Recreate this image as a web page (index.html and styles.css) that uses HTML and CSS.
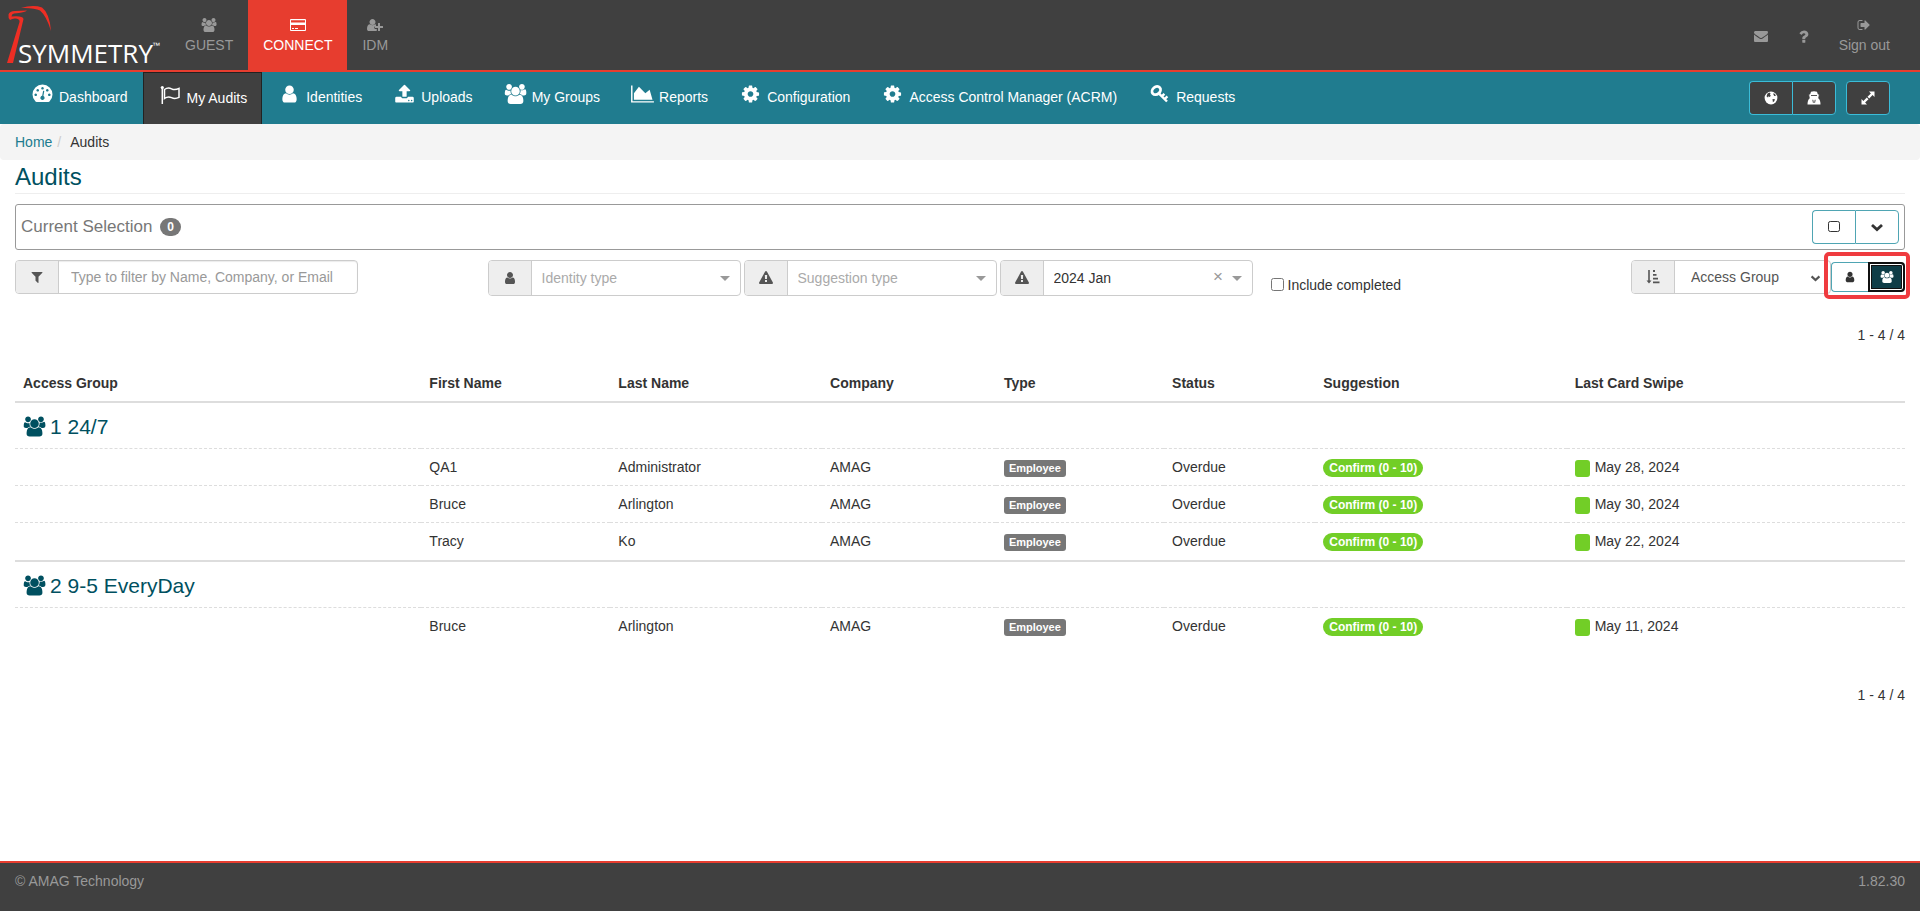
FILE: index.html
```html
<!DOCTYPE html>
<html lang="en">
<head>
    <meta charset="UTF-8">
    <meta name="viewport" content="width=device-width, initial-scale=1.0">
    <title>Audits</title>
    <link rel="stylesheet" href="styles.css">
</head>
<body>
    <!-- icon set -->
    <svg class="sprite" aria-hidden="true">
        <symbol id="i-users" viewBox="0 0 2048 1792"><path d="M657 896q-162 5-265 128h-134q-82 0-138-40.5t-56-118.5q0-353 124-353 6 0 43.5 21t97.5 42.5 119 21.5q67 0 133-23-5 37-5 66 0 159 93 287zm1071 637q0 120-73 189.500t-194 69.500h-874q-121 0-194-69.500t-73-189.500q0-53 3.500-103.500t14-109 26.500-108.500 43-97.500 62-81 85.500-53.500 111.500-20q10 0 43 21.500t73 48 107 48 135 21.500 135-21.500 107-48 73-48 43-21.500q61 0 111.500 20t85.500 53.500 62 81 43 97.500 26.500 108.500 14 109 3.500 103.500zm-1024-1277q0 106-75 181t-181 75-181-75-75-181 75-181 181-75 181 75 75 181zm704 384q0 159-112.500 271.500t-271.500 112.500-271.500-112.500-112.500-271.500 112.500-271.500 271.500-112.500 271.500 112.500 112.500 271.500zm576 225q0 78-56 118.500t-138 40.500h-134q-103-123-265-128 93-128 93-287 0-29-5-66 66 23 133 23 59 0 119-21.500t97.500-42.500 43.500-21q124 0 124 353zm-128-609q0 106-75 181t-181 75-181-75-75-181 75-181 181-75 181 75 75 181z"/></symbol>
        <symbol id="i-user" viewBox="0 0 1792 1792"><path d="M1536 1399q0 109-62.500 187t-150.500 78h-854q-88 0-150.500-78t-62.500-187q0-85 8.500-160.500t31.500-152 58.500-131 94-89 134.500-34.500q131 128 313 128t313-128q76 0 134.500 34.500t94 89 58.500 131 31.500 152 8.500 160.500zm-256-887q0 159-112.500 271.500t-271.500 112.500-271.500-112.500-112.500-271.500 112.500-271.500 271.500-112.500 271.500 112.500 112.500 271.500z"/></symbol>
        <symbol id="i-user-plus" viewBox="0 0 2048 1792"><path d="M704 896q-159 0-271.500-112.500t-112.500-271.500 112.500-271.500 271.500-112.500 271.500 112.500 112.500 271.500-112.500 271.500-271.500 112.500zM1664 1024h352q32 0 32 32v192q0 32-32 32h-352v352q0 32-32 32h-192q-32 0-32-32v-352h-352q-32 0-32-32v-192q0-32 32-32h352v-352q0-32 32-32h192q32 0 32 32v352zM928 1248q0 80 60 130t164 30h100v220q-40 36-130 36h-867q-120 0-188-69t-67-190q0-300 102-450t268-150q20 0 60 30 120 93 274 93t274-93q40-30 60-30 60 0 110 20v195q-220-20-220 228z"/></symbol>
        <symbol id="i-card" viewBox="0 0 16 14"><path fill-rule="evenodd" d="M1 1h14q1 0 1 1v10q0 1-1 1H1q-1 0-1-1V2q0-1 1-1zm0 1.200v2.300h14V2.200zM1 7v4.900h14V7zM2 10h2v1H2zm3 0h3v1H5z"/></symbol>
        <symbol id="i-dash" viewBox="0 0 20 20"><path fill-rule="evenodd" d="M3 17.600A10 10 0 1 1 17 17.600q-.5.400-1 .4H4q-.5 0-1-.4zM10 3a1.300 1.300 0 1 0 .01 0zM5.200 5a1.300 1.300 0 1 0 .01 0zM14.800 5a1.300 1.300 0 1 0 .01 0zM3.200 9.500a1.300 1.300 0 1 0 .01 0zM16.800 9.500a1.300 1.300 0 1 0 .01 0zM10.600 6.800l-.9 5a2.100 2.100 0 1 0 1.200.2l.9-5z"/></symbol>
        <symbol id="i-flag" viewBox="0 0 20 20"><path d="M1.800 2v17M4 4.500q3.500-2.500 7-.7t7.500-.4v9q-4 2-7.500.3t-7 .8z" fill="none" stroke="currentColor" stroke-width="1.500"/><circle cx="1.800" cy="2.500" r="1.600"/></symbol>
        <symbol id="i-upload" viewBox="0 0 1792 1792"><path d="M1344 1472q0-26-19-45t-45-19-45 19-19 45 19 45 45 19 45-19 19-45zm256 0q0-26-19-45t-45-19-45 19-19 45 19 45 45 19 45-19 19-45zm128-224v320q0 40-28 68t-68 28h-1472q-40 0-68-28t-28-68v-320q0-40 28-68t68-28h427q21 56 70.500 92t110.500 36h256q61 0 110.500-36t70.500-92h427q40 0 68 28t28 68zm-325-648q-17 40-59 40h-256v448q0 26-19 45t-45 19h-256q-26 0-45-19t-19-45v-448h-256q-42 0-59-40-17-39 14-69l448-448q18-19 45-19t45 19l448 448q31 30 14 69z"/></symbol>
        <symbol id="i-chart" viewBox="0 0 2048 1792"><path d="M2048 1536v128h-2048v-1536h128v1408h1920zm-384-1024l256 896h-1664v-576l448-576 576 576z"/></symbol>
        <symbol id="i-cog" viewBox="0 0 1792 1792"><path d="M1152 896q0-106-75-181t-181-75-181 75-75 181 75 181 181 75 181-75 75-181zm512-109v222q0 12-8 23t-20 13l-185 28q-19 54-39 91 35 50 107 138 10 12 10 25t-9 23q-27 37-99 108t-94 71q-12 0-26-9l-138-108q-44 23-91 38-16 136-29 186-7 28-36 28h-222q-14 0-24.500-8.500t-11.500-21.500l-28-184q-49-16-90-37l-141 107q-10 9-25 9-14 0-25-11-126-114-165-168-7-10-7-23 0-12 8-23 15-21 51-66.500t54-70.500q-27-50-41-99l-183-27q-13-2-21-12.500t-8-23.500v-222q0-12 8-23t19-13l186-28q14-46 39-92-40-57-107-138-10-12-10-24 0-10 9-23 26-36 98.500-107.500t94.500-71.500q13 0 26 10l138 107q44-23 91-38 16-136 29-186 7-28 36-28h222q14 0 24.500 8.500t11.500 21.500l28 184q49 16 90 37l142-107q9-9 24-9 13 0 25 10 129 119 165 170 7 8 7 22 0 12-8 23-15 21-51 66.500t-54 70.500q26 50 41 98l183 28q13 2 21 12.500t8 23.500z"/></symbol>
        <symbol id="i-key" viewBox="0 0 20 20"><path d="M9.800 9.800l7.700 7.700M12.500 12.200l2.400-2.400M15.300 15l2.600-2.600" fill="none" stroke="currentColor" stroke-width="2.400"/><ellipse cx="6.800" cy="6.600" rx="4.600" ry="3.700" transform="rotate(-40 6.800 6.600)" fill="none" stroke="currentColor" stroke-width="2.800"/></symbol>
        <symbol id="i-mail" viewBox="0 0 1792 1792"><path d="M1792 710v794q0 66-47 113t-113 47h-1472q-66 0-113-47t-47-113v-794q44 49 101 87 362 246 497 345 57 42 92.500 65.500t94.500 48 110 24.500h2q51 0 110-24.500t94.500-48 92.500-65.500q170-123 498-345 57-39 100-87zm0-294q0 79-49 151t-122 123q-376 261-468 325-10 7-42.500 30.500t-54 38-52 32.500-57.500 27-50 9h-2q-23 0-50-9t-57.500-27-52-32.500-54-38-42.500-30.500q-91-64-262-182.500t-205-142.500q-62-42-117-115.500t-55-136.500q0-78 41.500-130t118.500-52h1472q65 0 112.500 47t47.500 113z"/></symbol>
        <symbol id="i-help" viewBox="320 128 1152 1408"><path d="M1088 1256v240q0 16-12 28t-28 12h-240q-16 0-28-12t-12-28v-240q0-16 12-28t28-12h240q16 0 28 12t12 28zm316-600q0 54-15.500 101t-35 76.500-55 59.500-57.500 43.500-61 35.500q-41 23-68.500 65t-27.500 67q0 17-12 32.500t-28 15.500h-240q-15 0-25.500-18.500t-10.500-37.500v-45q0-83 65-156.500t143-108.500q59-27 84-56t25-76q0-42-46.500-74t-107.500-32q-65 0-108 29-35 25-107 115-13 16-31 16-12 0-25-8l-164-125q-13-10-15.500-25t5.500-28q160-266 464-266 80 0 161 31t146 83 106 127.500 41 158.500z"/></symbol>
        <symbol id="i-signout" viewBox="0 0 1792 1792"><path d="M704 1440q0 4 1 20t.5 26.500-3 23.500-10 19.500-20.500 6.500h-320q-119 0-203.500-84.500t-84.500-203.500v-704q0-119 84.500-203.500t203.500-84.500h320q13 0 22.500 9.500t9.500 22.500q0 4 1 20t.5 26.500-3 23.500-10 19.500-20.500 6.500h-320q-66 0-113 47t-47 113v704q0 66 47 113t113 47h312l11.500 1 11.500 3 8 5.500 7 9 2 13.500zm928-544q0 26-19 45l-544 544q-19 19-45 19t-45-19-19-45v-288h-448q-26 0-45-19t-19-45v-384q0-26 19-45t45-19h448v-288q0-26 19-45t45-19 45 19l544 544q19 19 19 45z"/></symbol>
        <symbol id="i-globe" viewBox="0 0 14 14"><circle cx="7" cy="7" r="6.400"/><path d="M3.500 2.500l2-1 1 1-.6 1.400 1.100.8-1.500 1.200-1.600-.6.300 1.500-1.700-1.600zM9 2.500l1.800.2 1.200 2-1.800.2zM8.500 8l2.500.3-.8 1.900-1.300 1z" fill="#404040"/></symbol>
        <symbol id="i-secret" viewBox="0 0 14 14"><path d="M4 .8q3-1.200 6 0l.8 2.400 1.700.8-1 .6q.3 1.700-.5 2.400 2.500 1.600 2.500 6.500H.5Q.5 8.600 3 7q-.8-.700-.500-2.400L1.500 4l1.700-.8z"/><path d="M4 4.500h6M5.800 8.800l.6 3M8.200 8.800l-.6 3" stroke="#404040" stroke-width=".9"/></symbol>
        <symbol id="i-expand" viewBox="0 0 14 14"><path d="M8 .500h5.500V6l-1.900-1.900-3.400 3.400-1.700-1.700 3.400-3.400zM.5 8l1.900 1.900 3.400-3.400 1.700 1.700-3.400 3.400L6 13.500H.5z"/></symbol>
        <symbol id="i-square" viewBox="0 0 14 14"><rect x="1.500" y="1.500" width="11" height="10" rx="1.800" fill="none" stroke="currentColor" stroke-width="1"/></symbol>
        <symbol id="i-chevron" viewBox="0 0 14 14"><path d="M2 5l5 4.600L12 5" fill="none" stroke="currentColor" stroke-width="2.800"/></symbol>
        <symbol id="i-filter" viewBox="0 0 1792 1792"><path d="M1595 295q17 41-14 70l-493 493v742q0 42-39 59-13 5-25 5-27 0-45-19l-256-256q-19-19-19-45v-486l-493-493q-31-29-14-70 17-39 59-39h1280q42 0 59 39z"/></symbol>
        <symbol id="i-warn" viewBox="0 0 1792 1792"><path d="M1024 1375v-190q0-14-9.500-23.500t-22.500-9.500h-192q-13 0-22.500 9.500t-9.500 23.500v190q0 14 9.500 23.500t22.500 9.500h192q13 0 22.500-9.500t9.500-23.500zm-2-374l18-459q0-12-10-19-13-11-24-11h-220q-11 0-24 11-10 7-10 21l17 457q0 10 10 16.500t24 6.500h185q14 0 23.500-6.500t10.500-16.500zm-14-934l768 1408q35 63-2 126-17 29-46.500 46t-63.500 17h-1536q-34 0-63.500-17t-46.500-46q-37-63-2-126l768-1408q17-31 47-49t65-18 65 18 47 49z"/></symbol>
        <symbol id="i-sort" viewBox="0 0 14 14"><path d="M2.200 0h1.600v10.500h1.700L3 13.500.5 10.500h1.700zM7 0h2v2H7zM7 4h3.500v1.800H7zM7 7.800h5v1.800H7zM7 11.500h6.500v1.800H7z"/></symbol>
    </svg>

    <header class="topbar">
        <a class="logo" href="#" aria-label="Symmetry">
            <svg width="170" height="70" viewBox="0 0 170 70">
                <path d="M7 63L19.500 22Q20 19 16 18.500Q12.500 18 10 20Q8 18 8.500 14.500Q9.500 11 15 11L27 10.500Q25 12.500 14 13.500Q11.500 14 11.500 16.500Q23 15.500 23.500 19L13 63Z" fill="#ee2e24"/>
                <path d="M21 8Q33 4.500 42 7.500Q49.500 13 51 31Q46.500 16 40 10.500Q34 7.500 21 8Z" fill="#ee2e24"/>
                <text class="logo-text" x="18" y="63">SYMMETRY</text>
                <text class="logo-tm" x="152" y="48">™</text>
            </svg>
        </a>
        <nav class="products">
            <a href="#"><svg class="icon wide"><use href="#i-users"/></svg><span>GUEST</span></a>
            <a href="#" class="active"><svg class="icon wide"><use href="#i-card"/></svg><span>CONNECT</span></a>
            <a href="#"><svg class="icon wide"><use href="#i-user-plus"/></svg><span>IDM</span></a>
        </nav>
        <nav class="account">
            <a href="#" aria-label="Messages"><svg class="icon"><use href="#i-mail"/></svg></a>
            <a href="#" aria-label="Help"><svg class="icon help"><use href="#i-help"/></svg></a>
            <a href="#"><svg class="icon"><use href="#i-signout"/></svg><span>Sign out</span></a>
        </nav>
    </header>

    <div class="menubar">
        <nav class="menu">
            <a href="#"><svg class="icon"><use href="#i-dash"/></svg>Dashboard</a>
            <a href="#" class="active"><svg class="icon"><use href="#i-flag"/></svg>My Audits</a>
            <a href="#"><svg class="icon"><use href="#i-user"/></svg>Identities</a>
            <a href="#"><svg class="icon"><use href="#i-upload"/></svg>Uploads</a>
            <a href="#"><svg class="icon"><use href="#i-users"/></svg>My Groups</a>
            <a href="#"><svg class="icon"><use href="#i-chart"/></svg>Reports</a>
            <a href="#"><svg class="icon"><use href="#i-cog"/></svg>Configuration</a>
            <a href="#"><svg class="icon"><use href="#i-cog"/></svg>Access Control Manager (ACRM)</a>
            <a href="#"><svg class="icon"><use href="#i-key"/></svg>Requests</a>
        </nav>
        <div class="tools">
            <div class="btn-group">
                <button type="button" class="btn btn-dark" aria-label="Language"><svg class="icon"><use href="#i-globe"/></svg></button>
                <button type="button" class="btn btn-dark" aria-label="Impersonate"><svg class="icon"><use href="#i-secret"/></svg></button>
            </div>
            <div class="btn-group">
                <button type="button" class="btn btn-dark" aria-label="Full width"><svg class="icon"><use href="#i-expand"/></svg></button>
            </div>
        </div>
    </div>

    <ol class="breadcrumb">
        <li><a href="#">Home</a></li>
        <li>Audits</li>
    </ol>

    <main>
        <h1>Audits</h1>

        <section class="selection">
            <span>Current Selection</span>
            <span class="count">0</span>
            <div class="btn-group">
                <button type="button" class="btn" aria-label="Select all"><svg class="icon"><use href="#i-square"/></svg></button>
                <button type="button" class="btn" aria-label="Expand"><svg class="icon"><use href="#i-chevron"/></svg></button>
            </div>
        </section>

        <form class="filters">
            <div class="search-col">
                <div class="input-group search">
                    <label class="addon" for="search" aria-label="Filter"><svg class="icon"><use href="#i-filter"/></svg></label>
                    <input type="text" id="search" placeholder="Type to filter by Name, Company, or Email">
                </div>
            </div>
            <div class="input-group picker">
                <label class="addon" for="identityType" aria-label="Identity type"><svg class="icon"><use href="#i-user"/></svg></label>
                <select id="identityType" class="empty"><option>Identity type</option></select>
                <span class="caret"></span>
            </div>
            <div class="input-group picker">
                <label class="addon" for="suggestionType" aria-label="Suggestion type"><svg class="icon"><use href="#i-warn"/></svg></label>
                <select id="suggestionType" class="empty"><option>Suggestion type</option></select>
                <span class="caret"></span>
            </div>
            <div class="input-group picker">
                <label class="addon" for="period" aria-label="Audit"><svg class="icon"><use href="#i-warn"/></svg></label>
                <select id="period"><option>2024 Jan</option></select>
                <button type="button" class="clear" aria-label="Clear">×</button>
                <span class="caret"></span>
            </div>
            <label class="check"><input type="checkbox" id="completed">Include completed</label>
            <div class="input-group sort">
                <label class="addon" for="sortBy" aria-label="Sort by"><svg class="icon"><use href="#i-sort"/></svg></label>
                <select id="sortBy"><option>Access Group</option></select>
                <svg class="icon arrow"><use href="#i-chevron"/></svg>
            </div>
            <div class="view-toggle">
                <button type="button" class="btn" aria-label="By identity"><svg class="icon"><use href="#i-user"/></svg></button>
                <button type="button" class="btn current" aria-label="By group"><svg class="icon wide"><use href="#i-users"/></svg></button>
            </div>
        </form>

        <p class="pager">1 - 4 / 4</p>

        <table>
            <colgroup>
                <col class="c-group"><col class="c-first"><col class="c-last"><col class="c-company"><col class="c-type"><col class="c-status"><col class="c-suggestion"><col>
            </colgroup>
            <thead>
                <tr>
                    <th>Access Group</th>
                    <th>First Name</th>
                    <th>Last Name</th>
                    <th>Company</th>
                    <th>Type</th>
                    <th>Status</th>
                    <th>Suggestion</th>
                    <th>Last Card Swipe</th>
                </tr>
            </thead>
            <tbody>
                <tr class="group"><td colspan="8"><a href="#"><svg class="icon"><use href="#i-users"/></svg>1 24/7</a></td></tr>
                <tr>
                    <td></td><td>QA1</td><td>Administrator</td><td>AMAG</td>
                    <td><span class="label">Employee</span></td><td>Overdue</td>
                    <td><span class="badge">Confirm (0 - 10)</span></td>
                    <td><span class="dot"></span>May 28, 2024</td>
                </tr>
                <tr>
                    <td></td><td>Bruce</td><td>Arlington</td><td>AMAG</td>
                    <td><span class="label">Employee</span></td><td>Overdue</td>
                    <td><span class="badge">Confirm (0 - 10)</span></td>
                    <td><span class="dot"></span>May 30, 2024</td>
                </tr>
                <tr>
                    <td></td><td>Tracy</td><td>Ko</td><td>AMAG</td>
                    <td><span class="label">Employee</span></td><td>Overdue</td>
                    <td><span class="badge">Confirm (0 - 10)</span></td>
                    <td><span class="dot"></span>May 22, 2024</td>
                </tr>
            </tbody>
            <tbody>
                <tr class="group"><td colspan="8"><a href="#"><svg class="icon"><use href="#i-users"/></svg>2 9-5 EveryDay</a></td></tr>
                <tr>
                    <td></td><td>Bruce</td><td>Arlington</td><td>AMAG</td>
                    <td><span class="label">Employee</span></td><td>Overdue</td>
                    <td><span class="badge">Confirm (0 - 10)</span></td>
                    <td><span class="dot"></span>May 11, 2024</td>
                </tr>
            </tbody>
        </table>

        <p class="pager">1 - 4 / 4</p>
    </main>

    <footer>
        <span>© AMAG Technology</span>
        <span>1.82.30</span>
    </footer>
</body>
</html>
```

FILE: styles.css
```css
* {
    box-sizing: border-box;
}
body {
    margin: 0;
    min-height: 100vh;
    display: flex;
    flex-direction: column;
    font-family: "Liberation Sans", Arial, sans-serif;
    font-size: 14px;
    line-height: 20px;
    color: #333;
    background-color: #fff;
}
a {
    color: #207c8f;
    text-decoration: none;
}
button, input, select {
    font: inherit;
    color: inherit;
    margin: 0;
}
.sprite {
    display: none;
}
.icon {
    width: 14px;
    height: 14px;
    fill: currentColor;
    flex: none;
}
.icon.wide {
    width: 16px;
}

/* top bar */
.topbar {
    display: flex;
    background-color: #404040;
    border-bottom: 2px solid #e73d2f;
}
.logo {
    width: 170px;
    height: 70px;
}
.logo-text {
    font-family: "Open Sans", sans-serif;
    font-size: 26px;
    fill: #fff;
}
.logo-tm {
    font-size: 8px;
    fill: #fff;
}
.products, .account {
    display: flex;
}
.products a, .account a {
    display: flex;
    flex-direction: column;
    justify-content: center;
    align-items: center;
    gap: 3px;
    padding: 2px 15px 0;
    color: #999;
}
.products a.active {
    background-color: #e73d2f;
    color: #fff;
}
.account {
    margin-left: auto;
    margin-right: 15px;
}
.account .help {
    width: 11px;
}

/* main menu */
.menubar {
    display: flex;
    justify-content: space-between;
    align-items: center;
    background-color: #207c8f;
    padding-right: 30px;
}
.menu {
    display: flex;
    padding-left: 15px;
}
.menu a {
    display: flex;
    align-items: center;
    height: 52px;
    padding: 0 15px 2px;
    color: #fff;
}
.menu a.active {
    background-color: #404040;
    border: 1px solid #222;
    border-bottom: 0;
    padding: 0 14px 1px;
}
.menu .icon {
    width: 25px;
    height: 20px;
    margin-right: 4px;
    margin-bottom: 6px;
}
.tools {
    display: flex;
    gap: 10px;
}
.btn-group, .view-toggle {
    display: flex;
}
.btn {
    display: flex;
    align-items: center;
    justify-content: center;
    width: 44px;
    height: 34px;
    padding: 0;
    border: 1px solid #4fa5b3;
    border-radius: 4px;
    background-color: #fff;
    cursor: pointer;
}
.btn-dark {
    background-color: #404040;
    border-color: #3bbcd8;
    color: #fff;
}
.btn:not(:last-child) {
    width: 43px;
    border-right: 0;
    border-top-right-radius: 0;
    border-bottom-right-radius: 0;
}
.btn:last-child:not(:first-child) {
    border-top-left-radius: 0;
    border-bottom-left-radius: 0;
}

/* breadcrumb and title */
.breadcrumb {
    display: flex;
    margin: 0;
    padding: 8px 15px;
    list-style: none;
    background-color: #f4f4f4;
    border-radius: 4px;
}
.breadcrumb li + li::before {
    content: "/";
    padding: 0 9px 0 5px;
    color: #ccc;
}
main {
    flex: 1;
    padding: 0 15px;
}
h1 {
    margin: 0 0 10px;
    padding: 4px 0 3px;
    font-size: 24px;
    line-height: 26px;
    font-weight: normal;
    color: #005060;
    border-bottom: 1px solid #eee;
}

/* current selection */
.selection {
    display: flex;
    align-items: center;
    gap: 8px;
    height: 46px;
    padding: 0 5px;
    border: 1px solid #999;
    border-radius: 3px;
    font-size: 17px;
    color: #777;
}
.selection .btn-group {
    margin-left: auto;
    color: #333;
}
.count {
    padding: 0 7px;
    border-radius: 10px;
    background-color: #777;
    color: #fff;
    font-size: 12px;
    font-weight: bold;
    line-height: 18px;
}

/* filters */
.filters {
    display: flex;
    align-items: flex-start;
    margin-top: 10px;
}
.search-col {
    flex: 0 0 25%;
}
.input-group {
    position: relative;
    display: flex;
    height: 34px;
    border: 1px solid #ccc;
    border-radius: 4px;
}
.addon {
    display: flex;
    align-items: center;
    justify-content: center;
    flex: 0 0 43px;
    background-color: #eee;
    border-right: 1px solid #ccc;
    border-radius: 3px 0 0 3px;
    color: #555;
}
.input-group input, .input-group select {
    flex: 1;
    min-width: 0;
    padding: 0 12px;
    border: 0;
    border-radius: 4px;
    outline: none;
    background-color: transparent;
    appearance: none;
}
.search {
    width: 343px;
    box-shadow: inset 0 1px 1px #ececec;
}
.search input::placeholder {
    color: #999;
    opacity: 1;
}
.picker {
    width: 253px;
    height: 36px;
    margin-right: 3px;
}
.picker select {
    padding: 0 10px;
}
.picker select.empty {
    color: #aaa;
}
.caret {
    position: absolute;
    top: 15px;
    right: 10px;
    border: 5px solid transparent;
    border-top-color: #999;
    border-bottom: 0;
    pointer-events: none;
}
.clear {
    position: absolute;
    top: 7px;
    right: 25px;
    width: 17px;
    padding: 0;
    border: 0;
    background: none;
    color: #999;
    font-size: 17px;
    line-height: 18px;
}
.check {
    display: flex;
    align-items: center;
    gap: 4px;
    margin: 15px 0 0 15px;
}
.check input {
    width: 13px;
    height: 13px;
    margin-bottom: 2px;
}
.sort {
    width: 200px;
    margin-left: auto;
    color: #555;
}
.sort select {
    padding: 0 16px;
}
.sort .arrow {
    position: absolute;
    top: 10px;
    right: 9px;
    width: 11px;
    pointer-events: none;
}
.view-toggle {
    position: relative;
    margin-top: 2px;
}
.view-toggle .btn {
    width: 37px;
    height: 30px;
}
.view-toggle .btn .icon {
    height: 12px;
}
.view-toggle .current {
    border: 2px solid #101010;
    background-color: #0f3d47;
    color: #fff;
    box-shadow: inset 0 0 0 1px #fff, inset 0 0 0 2px #101010;
}
/* red frame around the view switch */
.view-toggle::after {
    content: "";
    position: absolute;
    inset: -10px -5px -7px -7px;
    border: 4px solid #ef3b3f;
    border-radius: 5px;
    pointer-events: none;
}
.pager {
    margin: 29px 0 20px;
    text-align: right;
}

/* audit table */
table {
    width: 100%;
    margin-bottom: 40px;
    table-layout: fixed;
    border-collapse: separate;
    border-spacing: 0;
}
.c-group {
    width: 21.5%;
}
.c-first {
    width: 10%;
}
.c-last {
    width: 11.2%;
}
.c-company {
    width: 9.2%;
}
.c-type {
    width: 8.9%;
}
.c-status {
    width: 8%;
}
.c-suggestion {
    width: 13.3%;
}
th, td {
    padding: 8px;
    text-align: left;
    vertical-align: top;
}
th {
    border-bottom: 2px solid #ddd;
}
td {
    height: 37px;
    border-top: 1px dashed #ddd;
}
tr:last-child td {
    height: 38px;
}
.group td {
    padding: 9px 8px 7px;
    border-top: 0;
}
tbody + tbody .group td {
    border-top: 2px solid #ddd;
}
.group a {
    display: flex;
    align-items: center;
    gap: 4px;
    font-size: 21px;
    line-height: 29px;
    color: #005060;
}
.group .icon {
    width: 23px;
    height: 21px;
}
.label, .badge, .dot {
    display: block;
    float: left;
    color: #fff;
    font-weight: bold;
}
.label {
    margin-top: 3px;
    padding: 0 5px;
    border-radius: 3px;
    background-color: #777;
    font-size: 11px;
    line-height: 17px;
}
.badge {
    margin-top: 2px;
    padding: 0 6px;
    border-radius: 9px;
    background-color: #72ce27;
    font-size: 12px;
    line-height: 18px;
}
.dot {
    width: 15px;
    height: 17px;
    margin: 3px 5px 0 0;
    border-radius: 3px;
    background-color: #72ce27;
}

footer {
    display: flex;
    justify-content: space-between;
    padding: 8px 15px 20px;
    background-color: #404040;
    border-top: 2px solid #e73d2f;
    color: #999;
}
```
